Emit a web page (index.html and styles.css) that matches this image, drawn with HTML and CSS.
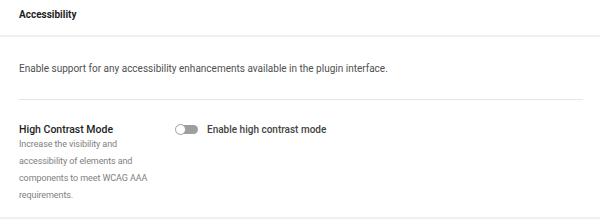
FILE: index.html
```html
<!DOCTYPE html>
<html lang="en">
<head>
  <meta charset="UTF-8">
  <meta name="viewport" content="width=device-width, initial-scale=1.0">
  <title>Accessibility</title>
  <link rel="stylesheet" href="styles.css">
</head>
<body>
  <div class="panel-header">
    <h2>Accessibility</h2>
  </div>

  <div class="panel-body">
    <p class="intro">Enable support for any accessibility enhancements available in the plugin interface.</p>

    <div class="setting-row">
      <div class="setting-info">
        <h3>High Contrast Mode</h3>
        <p>Increase the visibility and accessibility of elements and components to meet WCAG AAA requirements.</p>
      </div>
      <label class="toggle">
        <input type="checkbox">
        <span class="track"><span class="knob"></span></span>
        Enable high contrast mode
      </label>
    </div>
  </div>
</body>
</html>
```

FILE: styles.css
```css
body {
  margin: 0;
  font-family: Roboto, 'Noto Sans', sans-serif;
  background: #fff;
  color: #1e1e1e;
}

.panel-header {
  padding: 9px 19px 0;
  height: 26px;
  border-bottom: 2px solid #f0f0f0;
}

.panel-header h2 {
  margin: 0;
  font-size: 10px;
  line-height: 12px;
  font-weight: 700;
}

.panel-body {
  padding: 0 17px 0 19px;
  border-bottom: 2px solid #f0f0f0;
}

.intro {
  margin: 0;
  padding: 26px 0 24px;
  font-size: 10px;
  line-height: 12px;
  color: #505050;
  border-bottom: 1px solid #e6e6e6;
}

.setting-row {
  display: flex;
  padding: 24px 0 13px;
}

.setting-info {
  width: 157px;
}

.setting-info h3 {
  margin: 0;
  font-size: 10.5px;
  line-height: 12px;
  font-weight: 500;
}

.setting-info p {
  margin: 0;
  max-width: 134px;
  font-size: 9px;
  letter-spacing: -0.1px;
  line-height: 17px;
  color: #808080;
}

.toggle {
  display: flex;
  align-items: center;
  gap: 9px;
  height: 11px;
  font-size: 10px;
  font-weight: 500;
  color: #444;
  cursor: pointer;
}

.toggle input {
  display: none;
}

.track {
  position: relative;
  width: 22px;
  height: 9px;
  border-radius: 5px;
  background: #9e9e9e;
}

.knob {
  position: absolute;
  left: -1px;
  top: -1px;
  width: 9px;
  height: 9px;
  border-radius: 50%;
  background: #fff;
  border: 1px solid #9e9e9e;
}
```
